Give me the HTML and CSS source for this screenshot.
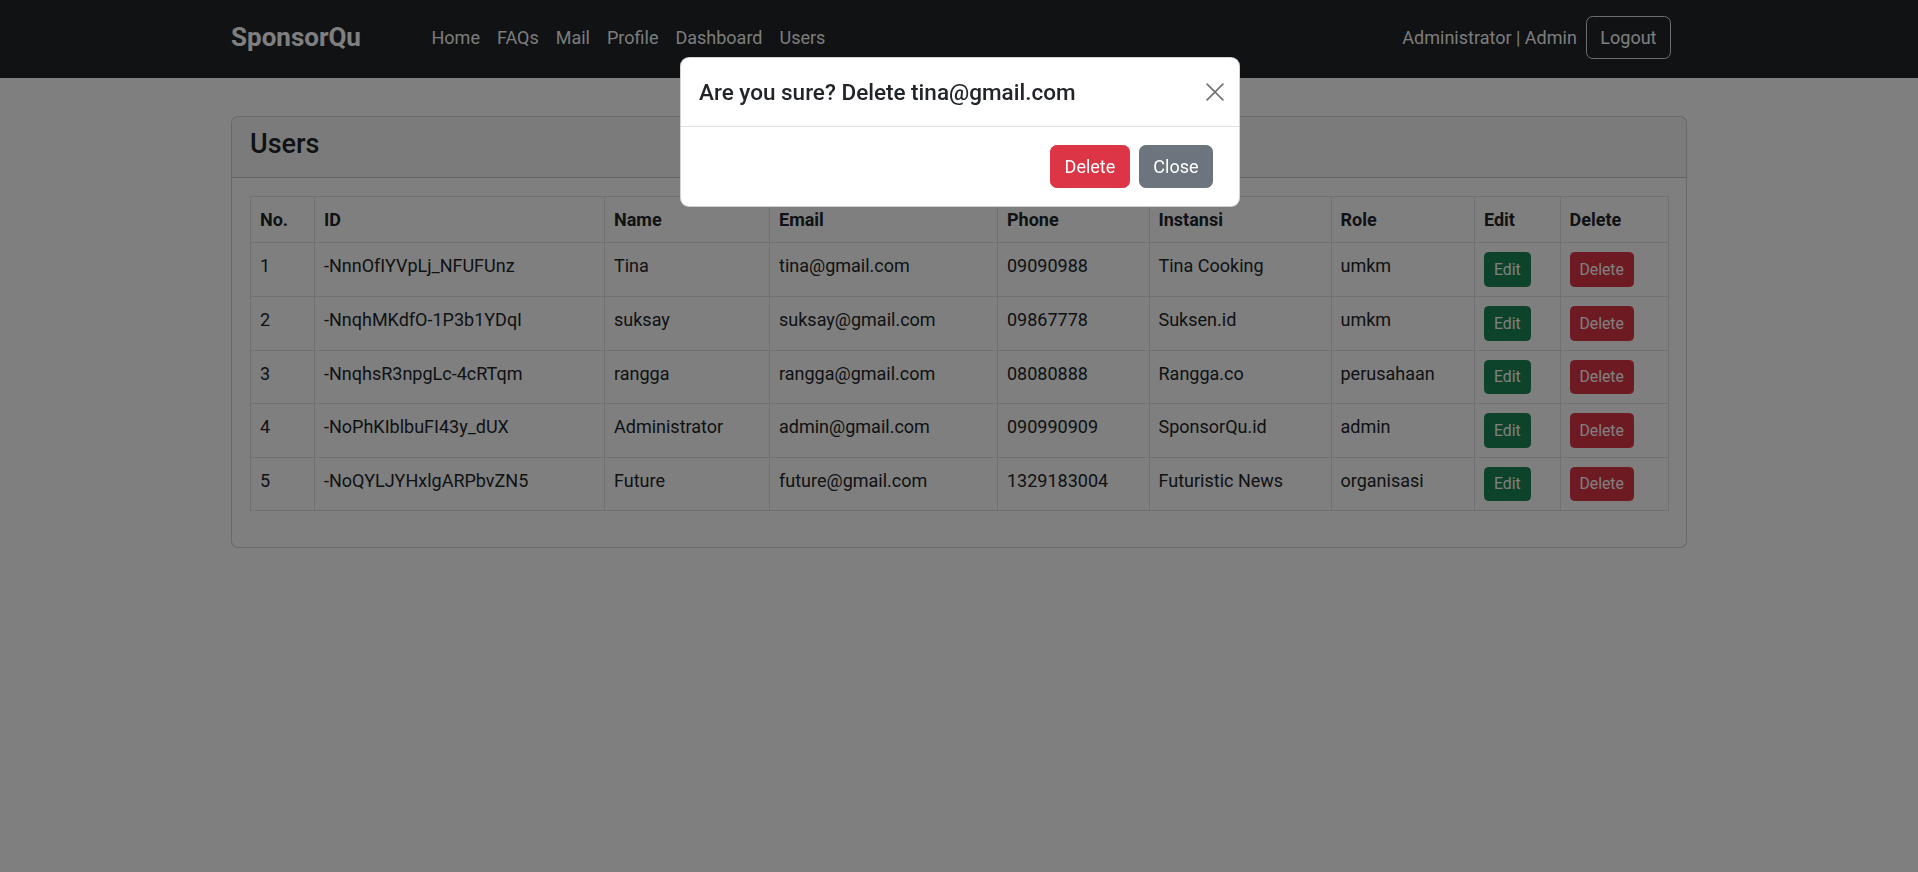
FILE: index.html
```html
<!DOCTYPE html>
<html lang="en">
<head>
<meta charset="utf-8">
<title>SponsorQu - Users</title>
<link rel="stylesheet" href="styles.css">
</head>
<body>
<nav class="navbar">
  <div class="container nav-inner">
    <a class="brand" href="#">SponsorQu</a>
    <ul class="nav-links">
      <li><a href="#">Home</a></li>
      <li><a href="#">FAQs</a></li>
      <li><a href="#">Mail</a></li>
      <li><a href="#">Profile</a></li>
      <li><a href="#">Dashboard</a></li>
      <li><a href="#">Users</a></li>
    </ul>
    <div class="nav-right">
      <span class="user-label">Administrator | Admin</span>
      <button class="btn btn-outline-light">Logout</button>
    </div>
  </div>
</nav>

<main class="container main">
  <section class="card">
    <div class="card-header">
      <h4 class="card-title">Users</h4>
    </div>
    <div class="card-body">
      <table class="table">
        <colgroup>
          <col class="c-no"><col class="c-id"><col class="c-name"><col class="c-email"><col class="c-phone"><col class="c-inst"><col class="c-role"><col class="c-edit"><col class="c-del">
        </colgroup>
        <thead>
          <tr>
            <th>No.</th><th>ID</th><th>Name</th><th>Email</th><th>Phone</th><th>Instansi</th><th>Role</th><th>Edit</th><th>Delete</th>
          </tr>
        </thead>
        <tbody>
          <tr>
            <td>1</td><td>-NnnOfIYVpLj_NFUFUnz</td><td>Tina</td><td>tina@gmail.com</td><td>09090988</td><td>Tina Cooking</td><td>umkm</td>
            <td><button class="btn btn-sm btn-success">Edit</button></td><td><button class="btn btn-sm btn-danger">Delete</button></td>
          </tr>
          <tr>
            <td>2</td><td>-NnqhMKdfO-1P3b1YDqI</td><td>suksay</td><td>suksay@gmail.com</td><td>09867778</td><td>Suksen.id</td><td>umkm</td>
            <td><button class="btn btn-sm btn-success">Edit</button></td><td><button class="btn btn-sm btn-danger">Delete</button></td>
          </tr>
          <tr>
            <td>3</td><td>-NnqhsR3npgLc-4cRTqm</td><td>rangga</td><td>rangga@gmail.com</td><td>08080888</td><td>Rangga.co</td><td>perusahaan</td>
            <td><button class="btn btn-sm btn-success">Edit</button></td><td><button class="btn btn-sm btn-danger">Delete</button></td>
          </tr>
          <tr>
            <td>4</td><td>-NoPhKIblbuFI43y_dUX</td><td>Administrator</td><td>admin@gmail.com</td><td>090990909</td><td>SponsorQu.id</td><td>admin</td>
            <td><button class="btn btn-sm btn-success">Edit</button></td><td><button class="btn btn-sm btn-danger">Delete</button></td>
          </tr>
          <tr>
            <td>5</td><td>-NoQYLJYHxlgARPbvZN5</td><td>Future</td><td>future@gmail.com</td><td>1329183004</td><td>Futuristic News</td><td>organisasi</td>
            <td><button class="btn btn-sm btn-success">Edit</button></td><td><button class="btn btn-sm btn-danger">Delete</button></td>
          </tr>
        </tbody>
      </table>
    </div>
  </section>
</main>

<div class="backdrop"></div>

<div class="modal" role="dialog" aria-modal="true">
  <div class="modal-header">
    <h5 class="modal-title">Are you sure? Delete tina@gmail.com</h5>
    <button class="btn-close" aria-label="Close">
      <svg viewBox="0 0 16 16" width="18" height="18"><path d="M1 1 L15 15 M15 1 L1 15" stroke="#000" stroke-width="1.5" stroke-linecap="round" fill="none"/></svg>
    </button>
  </div>
  <div class="modal-footer">
    <button class="btn btn-danger">Delete</button>
    <button class="btn btn-secondary">Close</button>
  </div>
</div>
</body>
</html>
```

FILE: styles.css
```css
* { box-sizing: border-box; }

html, body {
  margin: 0;
  padding: 0;
}

body {
  font-family: Roboto, "Liberation Sans", Arial, sans-serif;
  font-size: 18px;
  line-height: 1.5;
  color: #212529;
  background: #fff;
  min-height: 872px;
}

.container {
  width: 1456px;
  margin: 0 auto;
}

/* Navbar */
.navbar {
  background: #212529;
  height: 78px;
  padding-top: 16px;
}

.nav-inner {
  display: flex;
  align-items: center;
  height: 43px;
}

.brand {
  display: block;
  width: 192px;
  font-size: 26px;
  font-weight: 700;
  color: #fff;
  text-decoration: none;
  line-height: 1.5;
}

.nav-links {
  display: flex;
  list-style: none;
  margin: 0;
  padding: 0;
}

.nav-links a {
  display: block;
  padding: 0 8.5px;
  color: rgba(255, 255, 255, 0.97);
  text-decoration: none;
  line-height: 27px;
}

.nav-right {
  margin-left: auto;
  padding-right: 16px;
  display: flex;
  align-items: center;
  gap: 9px;
}

.user-label {
  color: rgba(255, 255, 255, 0.97);
}

/* Buttons */
.btn {
  font-family: inherit;
  font-size: 18px;
  line-height: 27px;
  padding: 6.75px 13.5px;
  border: 1px solid transparent;
  border-radius: 6.75px;
  color: #fff;
  cursor: pointer;
  background: transparent;
}

.btn-outline-light {
  border-color: #d9d9d9;
  color: #fcfcfc;
}

.btn-sm {
  font-size: 15.75px;
  line-height: 23.6px;
  padding: 4.5px 9px;
  border-radius: 4.5px;
}

.btn-success { background: #198754; border-color: #198754; }
.btn-danger { background: #dc3545; border-color: #dc3545; }
.btn-secondary { background: #6c757d; border-color: #6c757d; }

/* Main */
.main {
  padding-top: 38px;
}

.card {
  border: 1px solid rgba(0, 0, 0, 0.175);
  border-radius: 6.75px;
  background: #fff;
  overflow: hidden;
}

.card-header {
  padding: 11px 18px 8px;
  background: rgba(0, 0, 0, 0.03);
  border-bottom: 1px solid rgba(0, 0, 0, 0.175);
}

.card-title {
  margin: 0 0 9px;
  font-size: 27px;
  font-weight: 500;
  line-height: 32.4px;
}

.card-body {
  padding: 18px;
}

.table {
  width: 100%;
  table-layout: fixed;
  border-collapse: collapse;
  margin-bottom: 18px;
}

.table th,
.table td {
  border: 1px solid #dee2e6;
  padding: 9px;
  text-align: left;
  white-space: nowrap;
  vertical-align: top;
}

.table th { font-weight: 700; }

.c-no { width: 64px; }
.c-id { width: 290px; }
.c-name { width: 165px; }
.c-email { width: 228px; }
.c-phone { width: 151.5px; }
.c-inst { width: 182px; }
.c-role { width: 143.5px; }
.c-edit { width: 85.5px; }
.c-del { width: 108.5px; }

/* Modal overlay */
.backdrop {
  position: fixed;
  inset: 0;
  background: rgba(0, 0, 0, 0.5);
}

.modal {
  position: fixed;
  top: 57px;
  left: 680px;
  width: 560px;
  background: #fff;
  border: 1px solid rgba(0, 0, 0, 0.175);
  border-radius: 9px;
}

.modal-header {
  display: flex;
  align-items: center;
  padding: 18px;
  border-bottom: 1px solid #dee2e6;
}

.modal-title {
  margin: 0;
  font-size: 22.5px;
  font-weight: 500;
  line-height: 32px;
}

.btn-close {
  margin: -9px -7px -9px auto;
  padding: 4.5px;
  width: 27px;
  height: 27px;
  border: 0;
  background: transparent;
  opacity: 0.55;
  display: flex;
  align-items: center;
  justify-content: center;
  cursor: pointer;
}

.btn-close svg { display: block; }

.modal-footer {
  display: flex;
  justify-content: flex-end;
  padding: 13.5px 21.5px 13.5px 13.5px;
}

.modal-footer .btn {
  margin: 4.5px;
}
```
